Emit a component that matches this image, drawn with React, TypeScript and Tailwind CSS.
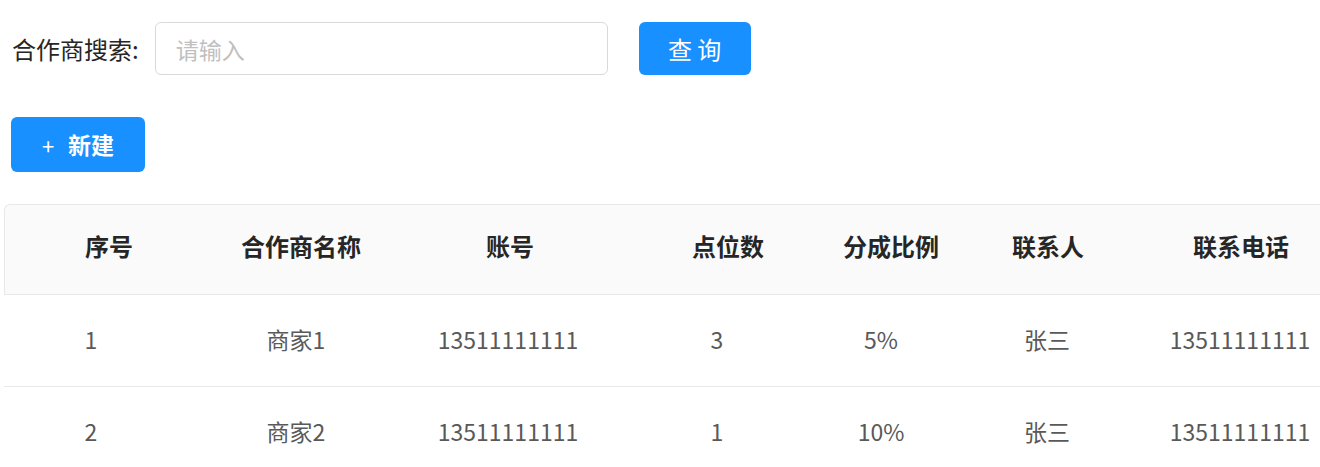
import React from "react";

type Column = {
  title: string;
  key: string;
  width: string;
  cellPad: string;
};

const columns: Column[] = [
  { title: "序号", key: "index", width: "w-[208px]", cellPad: "pr-[34px]" },
  { title: "合作商名称", key: "name", width: "w-[176px]", cellPad: "pr-[8px]" },
  { title: "账号", key: "account", width: "w-[242px]", cellPad: "pr-[2px]" },
  { title: "点位数", key: "points", width: "w-[194px]", cellPad: "pr-[20px]" },
  { title: "分成比例", key: "ratio", width: "w-[132px]", cellPad: "pr-[18px]" },
  { title: "联系人", key: "contact", width: "w-[182px]", cellPad: "" },
  { title: "联系电话", key: "phone", width: "w-[204px]", cellPad: "" },
];

const rows: Record<string, string>[] = [
  { index: "1", name: "商家1", account: "13511111111", points: "3", ratio: "5%", contact: "张三", phone: "13511111111" },
  { index: "2", name: "商家2", account: "13511111111", points: "1", ratio: "10%", contact: "张三", phone: "13511111111" },
];

const font = { fontFamily: '"Noto Sans CJK SC", "Noto Sans", sans-serif' };

export default function App() {
  return (
    <div className="h-[467px] w-[1320px] overflow-hidden bg-white" style={font}>
      {/* search bar */}
      <div className="flex items-center pl-[12px] pt-[22px]">
        <span className="text-[24px] text-[#262626]">合作商搜索:</span>
        <input
          placeholder="请输入"
          className="ml-[16px] h-[53px] w-[453px] rounded-[6px] border border-[#d9d9d9] px-[20px] text-[23px] outline-none placeholder:text-[#bfbfbf]"
        />
        <button className="ml-[31px] h-[53px] w-[112px] rounded-[6px] bg-[#1890ff] text-[24px] text-white">
          查 询
        </button>
      </div>

      <div className="pl-[11px] pt-[42px]">
        <button className="flex h-[55px] w-[134px] items-center justify-center gap-[14px] rounded-[6px] bg-[#1890ff] text-white">
          <span className="text-[22px] leading-none">+</span>
          <span className="text-[23px] font-semibold">新建</span>
        </button>
      </div>

      {/* table */}
      <div className="ml-[4px] mt-[32px] w-[1338px]">
        <div className="flex h-[91px] items-center rounded-tl-[6px] border-l border-t border-b border-[#e8e8e8] bg-[#fafafa] pb-[8px]">
          {columns.map((c) => (
            <div key={c.key} className={`${c.width} shrink-0 text-center text-[24px] font-bold text-[#262626]`}>
              {c.title}
            </div>
          ))}
        </div>
        {rows.map((r, i) => (
          <div key={i} className="flex h-[92px] items-center border-b border-[#e8e8e8] pb-[2px]">
            {columns.map((c) => (
              <div key={c.key} className={`${c.width} ${c.cellPad} shrink-0 text-center text-[23px] text-[#595959]`}>
                {r[c.key]}
              </div>
            ))}
          </div>
        ))}
      </div>
    </div>
  );
}
